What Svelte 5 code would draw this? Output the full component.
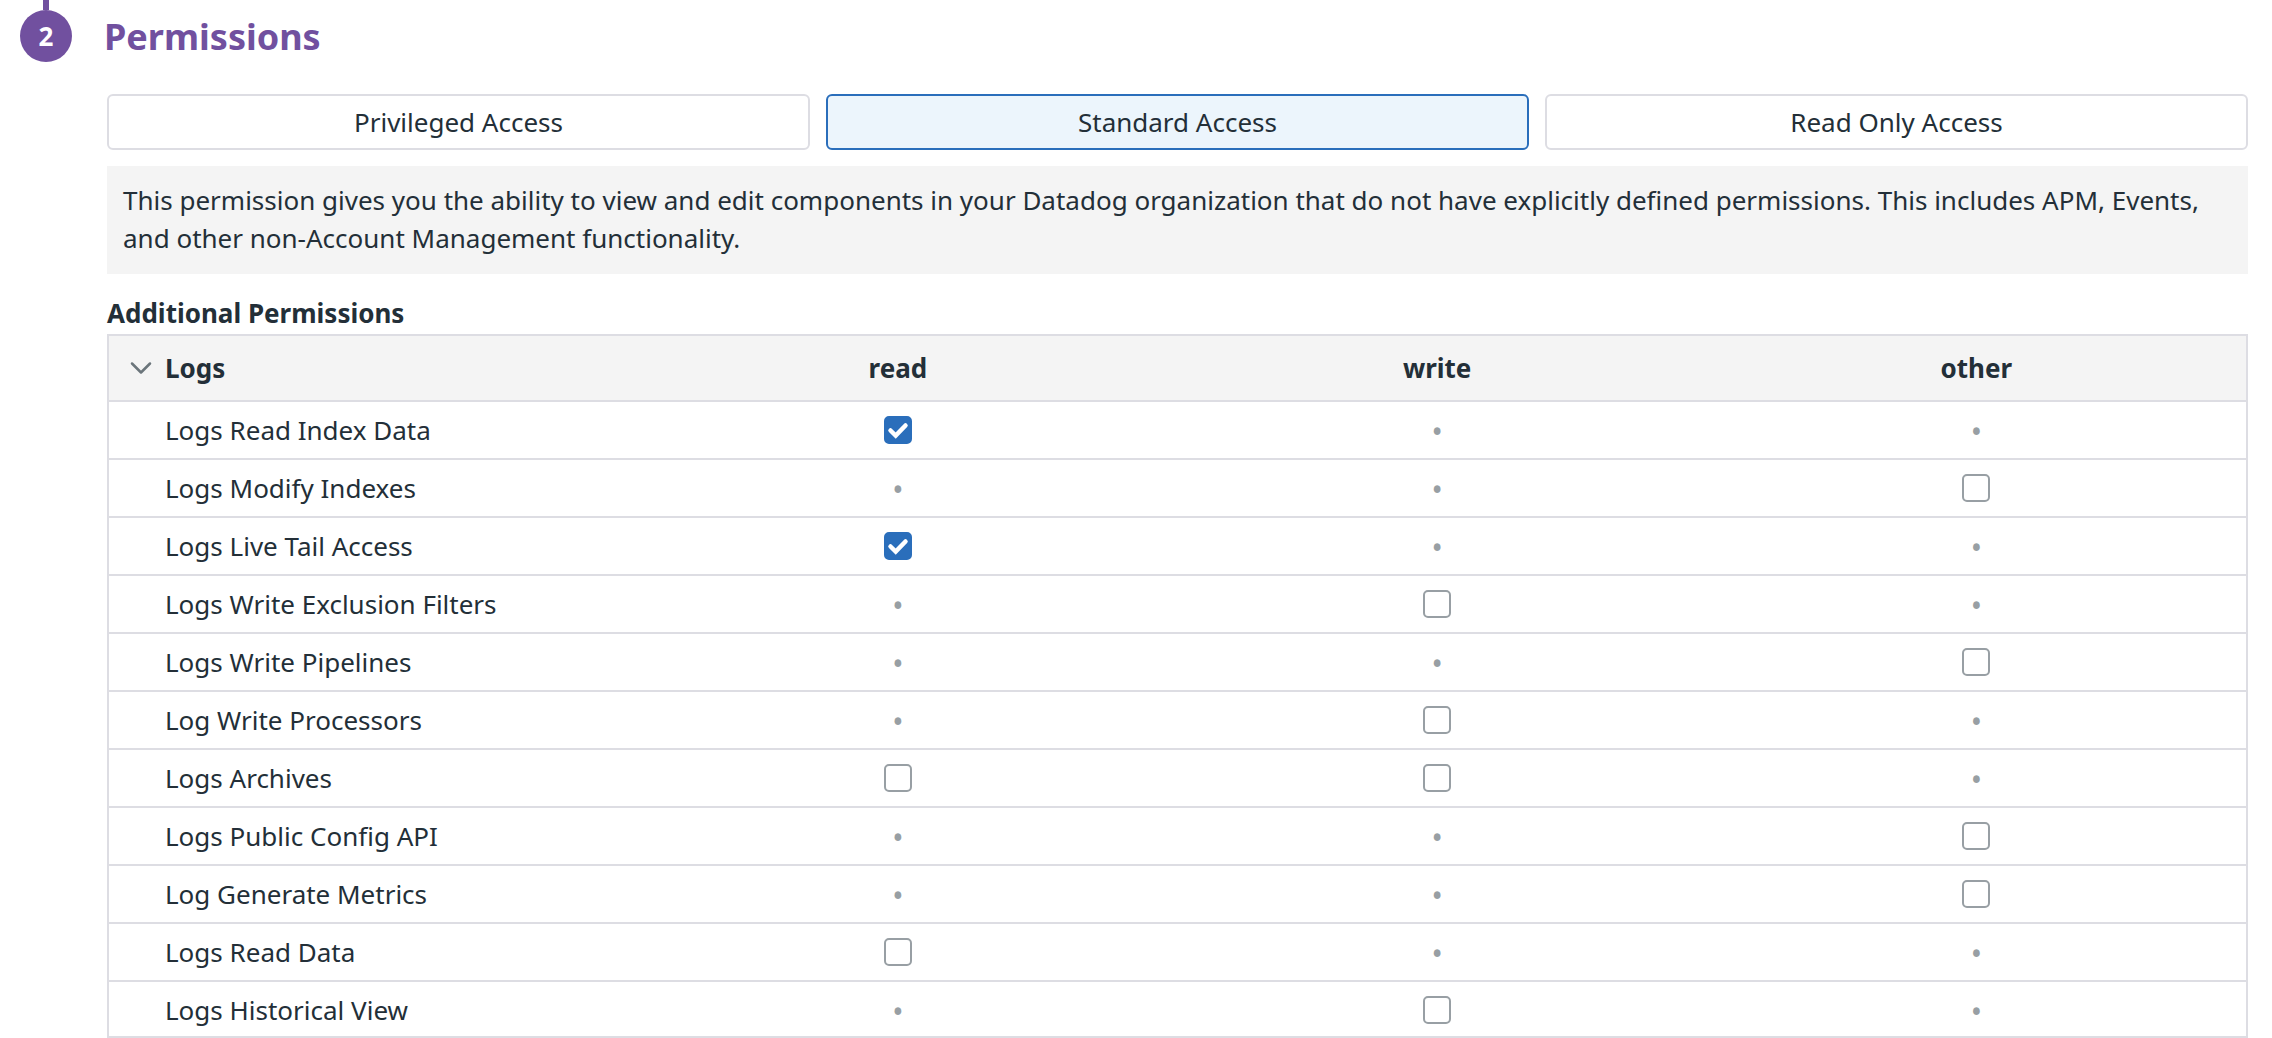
<script lang="ts">
  type Kind = 'read' | 'write' | 'other';
  type Permission = { name: string; options: Partial<Record<Kind, boolean>> };

  const kinds: Kind[] = ['read', 'write', 'other'];
  const levels = ['Privileged Access', 'Standard Access', 'Read Only Access'];

  let level = $state('Standard Access');
  let open = $state(true);
  let permissions = $state<Permission[]>([
    { name: 'Logs Read Index Data', options: { read: true } },
    { name: 'Logs Modify Indexes', options: { other: false } },
    { name: 'Logs Live Tail Access', options: { read: true } },
    { name: 'Logs Write Exclusion Filters', options: { write: false } },
    { name: 'Logs Write Pipelines', options: { other: false } },
    { name: 'Log Write Processors', options: { write: false } },
    { name: 'Logs Archives', options: { read: false, write: false } },
    { name: 'Logs Public Config API', options: { other: false } },
    { name: 'Log Generate Metrics', options: { other: false } },
    { name: 'Logs Read Data', options: { read: false } },
    { name: 'Logs Historical View', options: { write: false } },
  ]);
</script>

<main class="step">
  <header class="step-header">
    <div class="marker">
      <span class="rail"></span>
      <span class="badge">2</span>
    </div>
    <h2>Permissions</h2>
  </header>

  <div class="content">
    <div class="levels">
      {#each levels as name}
        <button
          type="button"
          class="level"
          class:selected={level === name}
          aria-pressed={level === name}
          onclick={() => (level = name)}>{name}</button>
      {/each}
    </div>

    <p class="note">
      This permission gives you the ability to view and edit components in your Datadog organization that do not have
      explicitly defined permissions. This includes APM, Events, and other non-Account Management functionality.
    </p>

    <h3>Additional Permissions</h3>

    <table>
      <thead>
        <tr>
          <th scope="col" class="name">
            <button type="button" class="toggle" aria-expanded={open} onclick={() => (open = !open)}>
              <svg class:closed={!open} width="24" height="24" viewBox="0 0 24 24" aria-hidden="true">
                <path d="M3 7.5 12 16.5 21 7.5" />
              </svg>
              Logs
            </button>
          </th>
          {#each kinds as kind}
            <th scope="col">{kind}</th>
          {/each}
        </tr>
      </thead>
      {#if open}
        <tbody>
          {#each permissions as permission}
            <tr>
              <th scope="row" class="name">{permission.name}</th>
              {#each kinds as kind}
                <td>
                  {#if kind in permission.options}
                    <label class="check">
                      <input
                        type="checkbox"
                        aria-label={`${permission.name}: ${kind}`}
                        bind:checked={permission.options[kind]} />
                      <svg viewBox="0 0 28 28" aria-hidden="true">
                        <path d="M6.5 14.5 11.7 19.5 21.5 9.5" />
                      </svg>
                    </label>
                  {:else}
                    <span class="none">•</span>
                  {/if}
                </td>
              {/each}
            </tr>
          {/each}
        </tbody>
      {/if}
    </table>
  </div>
</main>

<style>
  :global(body) {
    background: #fff;
  }

  .step {
    font-family: 'Noto Sans', sans-serif;
    font-size: 26px;
    line-height: 38px;
    color: #232f38;
  }

  .step-header {
    display: flex;
    gap: 32px;
    padding-left: 20px;
  }

  .marker {
    display: flex;
    flex-direction: column;
    align-items: center;
  }

  .rail {
    width: 6px;
    height: 10px;
    background: #71509f;
  }

  .badge {
    display: grid;
    place-items: center;
    width: 52px;
    height: 52px;
    border-radius: 50%;
    background: #71509f;
    color: #fff;
    font-weight: 700;
  }

  h2 {
    margin: 0;
    padding-top: 12px;
    font-size: 36px;
    line-height: 50px;
    color: #71509f;
  }

  .content {
    padding: 32px 24px 0 107px;
  }

  .levels {
    display: grid;
    grid-template-columns: repeat(3, 1fr);
    gap: 16px;
  }

  .level {
    padding: 7px 16px;
    border: 2px solid #dddde3;
    border-radius: 6px;
    background: #fff;
    font: inherit;
    color: inherit;
    cursor: pointer;
  }

  .level.selected {
    border-color: #2a6ebb;
    background: #ecf5fc;
  }

  .note {
    margin: 16px 0 20px;
    padding: 15px 16px 17px;
    background: #f4f4f4;
  }

  h3 {
    margin: 0 0 2px;
    font-size: 26px;
    line-height: 38px;
  }

  table {
    width: 100%;
    table-layout: fixed;
    border: 2px solid #dddde3;
    border-collapse: separate;
    border-spacing: 0;
  }

  th,
  td {
    box-sizing: border-box;
    padding: 0;
    text-align: center;
  }

  .name {
    width: 24.3%;
    padding-left: 56px;
    font-weight: 400;
    text-align: left;
  }

  thead th {
    height: 64px;
    background: #f4f4f4;
  }

  thead .name {
    padding-left: 20px;
  }

  tbody th,
  tbody td {
    height: 58px;
    border-top: 2px solid #dddde3;
  }

  tbody tr:last-child > * {
    height: 56px;
    padding-top: 2px;
  }

  .toggle {
    display: flex;
    align-items: center;
    gap: 12px;
    padding: 0;
    border: 0;
    background: none;
    font: inherit;
    font-weight: 700;
    color: inherit;
    cursor: pointer;
  }

  .toggle path {
    fill: none;
    stroke: #6b757b;
    stroke-width: 2.5;
    stroke-linecap: round;
    stroke-linejoin: round;
  }

  .toggle .closed {
    transform: rotate(-90deg);
  }

  .check {
    display: grid;
    justify-content: center;
    cursor: pointer;
  }

  .check > * {
    grid-area: 1 / 1;
    width: 28px;
    height: 28px;
  }

  .check input {
    appearance: none;
    box-sizing: border-box;
    margin: 0;
    border: 2px solid #989fa4;
    border-radius: 5px;
    background: #fff;
  }

  .check input:checked {
    border-color: #2a6ebb;
    background: #2a6ebb;
  }

  .check svg {
    pointer-events: none;
    visibility: hidden;
  }

  .check input:checked + svg {
    visibility: visible;
  }

  .check path {
    fill: none;
    stroke: #fff;
    stroke-width: 4.5;
    stroke-linecap: round;
    stroke-linejoin: miter;
  }

  .none {
    display: block;
    padding-top: 4px;
    font-size: 30px;
    color: #989fa4;
  }
</style>
